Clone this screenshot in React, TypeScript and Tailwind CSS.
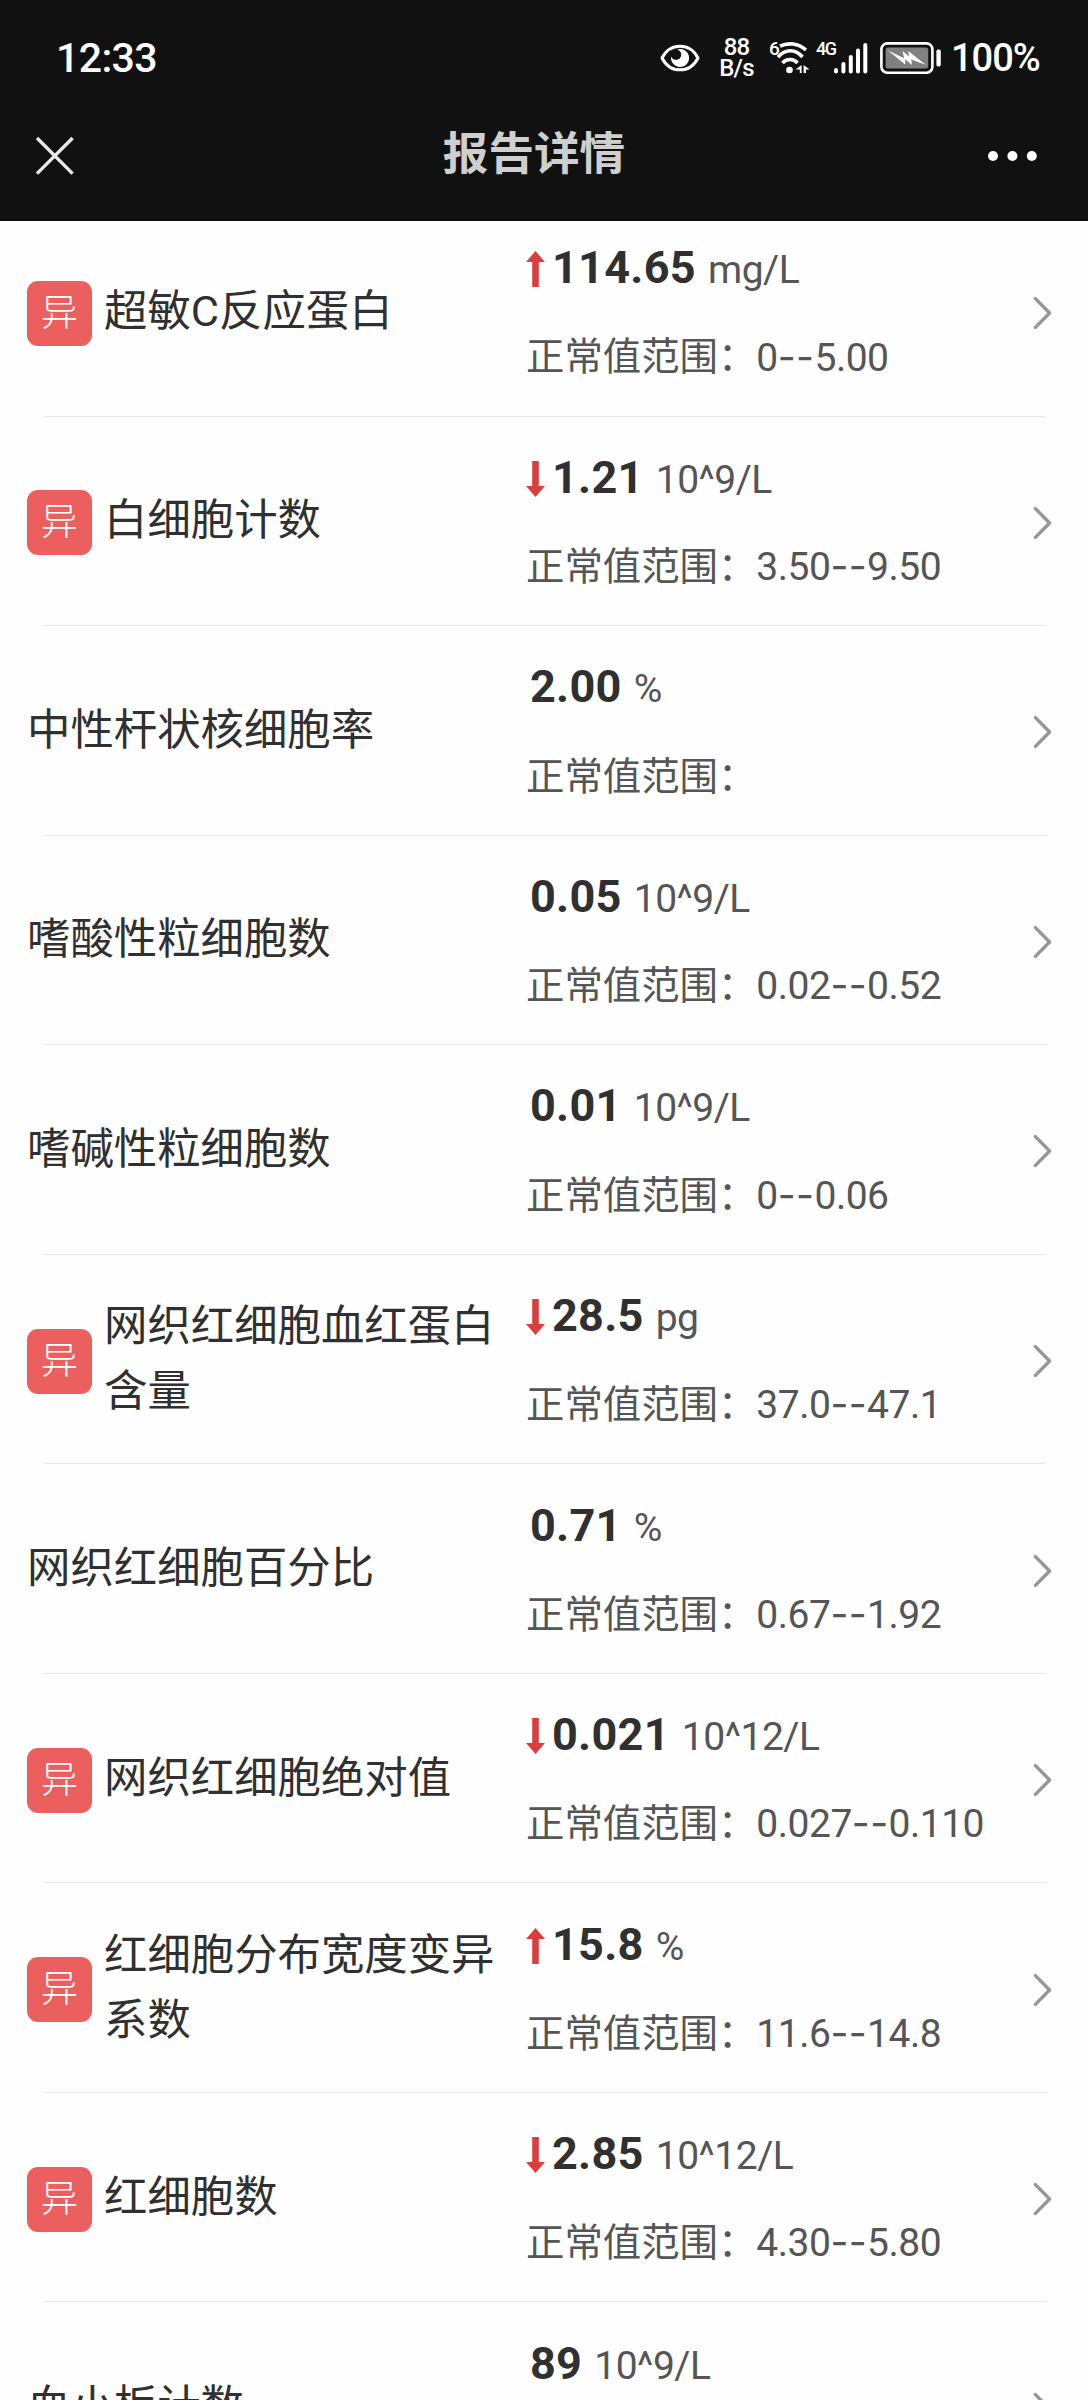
import clsx from "clsx";

type Flag = "up" | "down";

interface ReportItem {
  name: string;
  value: string;
  unit: string;
  range?: [string, string];
  flag?: Flag;
}

const items: ReportItem[] = [
  { name: "超敏C反应蛋白", value: "114.65", unit: "mg/L", range: ["0", "5.00"], flag: "up" },
  { name: "白细胞计数", value: "1.21", unit: "10^9/L", range: ["3.50", "9.50"], flag: "down" },
  { name: "中性杆状核细胞率", value: "2.00", unit: "%" },
  { name: "嗜酸性粒细胞数", value: "0.05", unit: "10^9/L", range: ["0.02", "0.52"] },
  { name: "嗜碱性粒细胞数", value: "0.01", unit: "10^9/L", range: ["0", "0.06"] },
  { name: "网织红细胞血红蛋白含量", value: "28.5", unit: "pg", range: ["37.0", "47.1"], flag: "down" },
  { name: "网织红细胞百分比", value: "0.71", unit: "%", range: ["0.67", "1.92"] },
  { name: "网织红细胞绝对值", value: "0.021", unit: "10^12/L", range: ["0.027", "0.110"], flag: "down" },
  { name: "红细胞分布宽度变异系数", value: "15.8", unit: "%", range: ["11.6", "14.8"], flag: "up" },
  { name: "红细胞数", value: "2.85", unit: "10^12/L", range: ["4.30", "5.80"], flag: "down" },
  { name: "血小板计数", value: "89", unit: "10^9/L", range: ["125", "350"] },
];

function EyeIcon() {
  return (
    <svg className="h-[30px] w-10" viewBox="0 0 40 30" fill="none">
      <path d="M2 15C10 -0.8 30 -0.8 38 15C30 30.8 10 30.8 2 15Z" stroke="#fff" strokeWidth="3" strokeLinejoin="round" />
      <path d="M17 6.5A9 9 0 1 1 11.2 13.5A5.2 5.2 0 1 0 17 6.5Z" fill="#fff" />
    </svg>
  );
}

function WifiIcon() {
  return (
    <svg className="h-[34px] w-8" viewBox="0 0 32 34" fill="none">
      <g stroke="#fff" strokeWidth="3.6">
        <path d="M3 5.2C11 1.2 21 2.2 29 9" />
        <path d="M1 16.2C8 7.6 18.5 7.6 25.5 16" />
        <path d="M5.5 22C9.5 17.4 16.5 17.4 20.5 22" />
      </g>
      <circle cx="12.5" cy="29" r="3.3" fill="#fff" />
      <path d="M24.6 24v8h-1.8v-3.4h-4.2zM26.6 24l6 4.4h-3.6v3.6h-2.4z" fill="#fff" />
    </svg>
  );
}

function SignalIcon() {
  return (
    <svg className="h-8 w-[34px]" viewBox="0 0 34 32" stroke="#fff" strokeWidth="4" strokeLinecap="round">
      <path d="M2 28v1.5M9.4 22v7.5M16.8 15v14.5M24 8.5v21M31.3 3v26.5" />
    </svg>
  );
}

function BatteryIcon() {
  return (
    <svg className="h-8 w-[62px]" viewBox="0 0 62 32" fill="none">
      <rect x="1.4" y="1.4" width="51" height="29.4" rx="6" stroke="#fff" strokeWidth="2.6" />
      <rect x="5.6" y="5.4" width="42.6" height="21.2" rx="2" fill="#808080" />
      <path d="M7.6 8.2L24 16.2L22.6 9L29 14.6L28.2 9L45.8 22.8L31.2 17.6L32 23L25.2 17.2L25.2 22.6Z" fill="#fff" />
      <rect x="56.4" y="7.6" width="4.4" height="16.8" rx="1.6" fill="#fff" />
    </svg>
  );
}

function FlagArrow({ flag }: { flag: Flag }) {
  return (
    <svg className={clsx("h-9 w-[19px]", flag === "down" && "rotate-180")} viewBox="0 0 19 36">
      <path d="M9.5 0L19 11H12.8V36H6.2V11H0Z" fill="#d83f3e" />
    </svg>
  );
}

function Chevron() {
  return (
    <svg className="h-9 w-[22px]" viewBox="0 0 22 36" fill="none">
      <path d="M3.4 3.6L17.6 18L3.4 32.4" stroke="#969696" strokeWidth="3.4" strokeLinecap="round" strokeLinejoin="round" />
    </svg>
  );
}

function StatusBar() {
  return (
    <div className="flex h-[116px] items-center pr-[49px] pl-14 font-medium text-white">
      <span className="text-[41px] leading-none tracking-[-0.6px]">12:33</span>
      <div className="ml-auto flex items-center">
        <EyeIcon />
        <div className="ml-[19px] w-[35px] text-center text-[24px] leading-[21px] tracking-[-0.8px]">
          <div>88</div>
          <div>B/s</div>
        </div>
        <span className="-mt-[20px] ml-[15px] w-2 text-[19px] leading-none">6</span>
        <WifiIcon />
        <span className="-mt-[19px] ml-[7px] w-[18px] text-[18px] leading-none tracking-[-1.6px]">4G</span>
        <SignalIcon />
        <span className="ml-3">
          <BatteryIcon />
        </span>
        <span className="ml-[9px] w-[88px] text-[38px] leading-none tracking-[-1px]">100%</span>
      </div>
    </div>
  );
}

function NavBar() {
  return (
    <div className="flex h-[105px] items-start justify-between pr-[51px] pl-[35px]">
      <svg className="mt-5 size-10" viewBox="0 0 40 40" stroke="#e8e8e8" strokeWidth="3.4">
        <path d="M2 2L37.6 37.6M37.6 2L2 37.6" />
      </svg>
      <h1 className="mt-1.5 ml-[5px] text-[45.6px] leading-[66px] font-bold text-[#cfcfcf]">报告详情</h1>
      <svg className="mt-[35px] h-[10px] w-[49px]" viewBox="0 0 49 10" fill="#fff">
        <circle cx="5" cy="5" r="5" />
        <circle cx="24.4" cy="5" r="5" />
        <circle cx="43.8" cy="5" r="5" />
      </svg>
    </div>
  );
}

function ReportRow({ item }: { item: ReportItem }) {
  return (
    <li className="flex h-[209.55px] flex-col">
      <div className="flex flex-1 items-center pt-[4px] pr-[34px] pl-[27px]">
        <div className="flex w-[499px] items-center">
          {item.flag && (
            <span className="mr-3 flex size-[65px] shrink-0 items-center justify-center rounded-[11px] bg-[#ec5f5f] text-[37px] leading-none font-light text-white">
              异
            </span>
          )}
          <span className="-mt-1 w-[396px] text-[43.4px] leading-[65px] text-[#303030]">{item.name}</span>
        </div>
        <div className="flex flex-1 flex-col whitespace-nowrap text-[#555]">
          <div className="flex h-[88px] items-center">
            {item.flag && <FlagArrow flag={item.flag} />}
            <div className={clsx("flex items-baseline leading-[52px]", item.flag ? "ml-[7px]" : "ml-[4px]")}>
              <span className="text-[45px] font-bold tracking-[0.3px] text-[#303030]">{item.value}</span>
              <span className="ml-3 text-[39px] tracking-[-0.5px]">{item.unit}</span>
            </div>
          </div>
          <div className="flex h-[88px] items-center text-[38.4px]">
            <span>正常值范围：</span>
            {item.range && (
              <span className="text-[39px] tracking-[-0.5px]">
                {item.range[0]}
                <span className="font-['Inter'] tracking-[0.4px]">--</span>
                {item.range[1]}
              </span>
            )}
          </div>
        </div>
        <Chevron />
      </div>
      <div className="mr-[41px] ml-[43px] h-px bg-[#e9e9e9]" />
    </li>
  );
}

export default function App() {
  return (
    <div className="flex h-[2400px] w-[1088px] flex-col overflow-hidden bg-[#fefefe] font-['Roboto','Noto_Sans_CJK_SC',sans-serif]">
      <header className="h-[221px] shrink-0 bg-[#111]">
        <StatusBar />
        <NavBar />
      </header>
      {/* list is scrolled a little under the header */}
      <main className="flex-1 overflow-hidden">
        <ul className="-mt-[14px]">
          {items.map((item) => (
            <ReportRow key={item.name} item={item} />
          ))}
        </ul>
      </main>
    </div>
  );
}
